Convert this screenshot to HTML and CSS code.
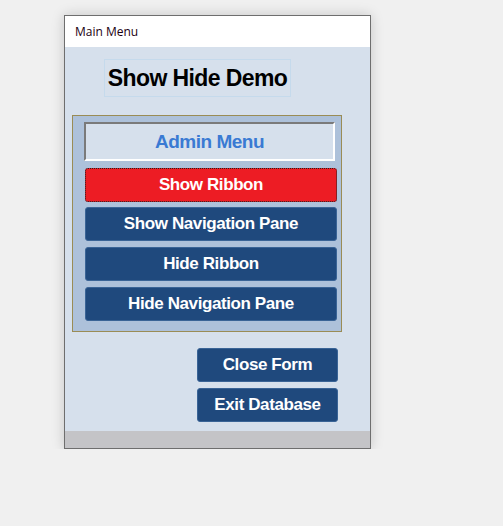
FILE: index.html
```html
<!DOCTYPE html>
<html lang="en">
<head>
    <meta charset="UTF-8">
    <meta name="viewport" content="width=device-width, initial-scale=1.0">
    <title>Main Menu</title>
    <link rel="stylesheet" href="styles.css">
</head>
<body>

<div class="window">
    <div class="title-bar">Main Menu</div>

    <div class="form-body">
        <div class="form-title">Show Hide Demo</div>

        <!-- Admin frame -->
        <div class="admin-frame">
            <div class="admin-label">Admin Menu</div>
            <button class="btn btn-red">Show Ribbon</button>
            <button class="btn">Show Navigation Pane</button>
            <button class="btn">Hide Ribbon</button>
            <button class="btn">Hide Navigation Pane</button>
        </div>

        <div class="bottom-buttons">
            <button class="btn btn-small">Close Form</button>
            <button class="btn btn-small">Exit Database</button>
        </div>
    </div>

    <div class="form-footer"></div>
</div>

</body>
</html>
```

FILE: styles.css
```css
/* General */
* {
    margin: 0;
    padding: 0;
    box-sizing: border-box;
}
body {
    background-color: #f0f0f0;
    padding: 15px 0 0 64px;
    font-family: "Liberation Sans", Arial, sans-serif;
}

.window {
    width: 307px;
    border: 1px solid #6e6e6e;
    background: #d6e0ec;
    box-shadow: 0 0 12px rgba(0, 0, 0, 0.18);
}
.title-bar {
    height: 31px;
    background: #fff;
    padding: 7px 0 0 10px;
    font-family: "Open Sans", "Noto Sans", sans-serif;
    font-size: 12px;
    color: #1a0010;
}

.form-body {
    height: 384px;
    padding-top: 12px;
}
.form-title {
    width: 187px;
    height: 38px;
    margin-left: 39px;
    border: 1px solid #c5daec;
    font-weight: bold;
    font-size: 23px;
    letter-spacing: -0.6px;
    line-height: 36px;
    text-align: center;
    white-space: nowrap;
    color: #000;
}

.admin-frame {
    width: 270px;
    height: 217px;
    margin: 18px 0 0 7px;
    border: 1px solid #9a8c55;
    background: #adc1da;
    padding: 6px 0 0 11px;
    display: flex;
    flex-direction: column;
}
.admin-label {
    width: 251px;
    height: 39px;
    border: 2px solid;
    border-color: #7a7a7a #fff #fff #7a7a7a;
    background: #d6e0ec;
    color: #3a7ad3;
    font-weight: bold;
    font-size: 19px;
    letter-spacing: -0.5px;
    line-height: 35px;
    text-align: center;
    margin-bottom: 7px;
}

.btn {
    display: block;
    width: 252px;
    height: 34px;
    margin-left: 1px;
    margin-bottom: 6px;
    border: 1px solid #3a6496;
    border-radius: 3px;
    background: #1f497d;
    color: #fff;
    font-family: inherit;
    font-weight: bold;
    font-size: 17px;
    letter-spacing: -0.4px;
    cursor: pointer;
}
.btn-red {
    background: #ed1c24;
    border: 1px dotted #222;
    margin-bottom: 5px;
}

.bottom-buttons {
    display: flex;
    flex-direction: column;
    align-items: flex-end;
    gap: 6px;
    margin: 16px 32px 0 0;
}
.btn-small {
    width: 141px;
    height: 34px;
    margin: 0;
}

.form-footer {
    height: 17px;
    background: #c4c4c7;
}
```
